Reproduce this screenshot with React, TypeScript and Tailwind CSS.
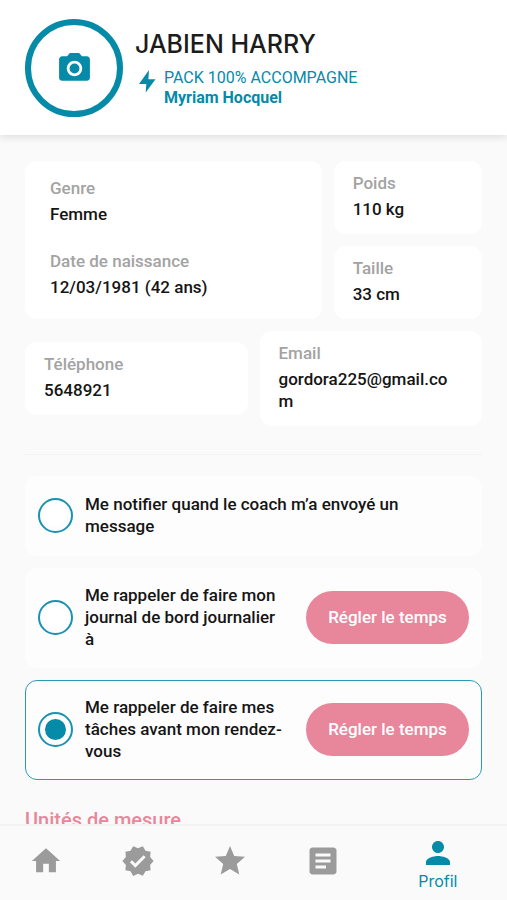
import React, { useState } from 'react';
import { MdArticle, MdCameraAlt, MdHome, MdPerson, MdStar, MdVerified } from 'react-icons/md';

type Tab = 'home' | 'tasks' | 'favorites' | 'journal' | 'profile';

interface Reminder {
  id: string;
  label: string;
  hasTime: boolean;
}

const reminders: Reminder[] = [
  { id: 'message', label: 'Me notifier quand le coach m’a envoyé un message', hasTime: false },
  { id: 'journal', label: 'Me rappeler de faire mon journal de bord journalier à', hasTime: true },
  { id: 'tasks', label: 'Me rappeler de faire mes tâches avant mon rendez-vous', hasTime: true },
];

const tabs: { id: Tab; label: string; icon: React.ReactNode }[] = [
  { id: 'home', label: 'Accueil', icon: <MdHome className="size-[34px]" /> },
  { id: 'tasks', label: 'Tâches', icon: <MdVerified className="size-[34px]" /> },
  { id: 'favorites', label: 'Favoris', icon: <MdStar className="size-9" /> },
  { id: 'journal', label: 'Journal', icon: <MdArticle className="size-9" /> },
  { id: 'profile', label: 'Profil', icon: <MdPerson className="size-9" /> },
];

const BoltIcon = () => (
  <svg viewBox="0 0 17 23" className="mt-0.5 h-[23px] w-[17px] shrink-0" fill="currentColor" aria-hidden="true">
    <path d="M10 0 0 14h7.3l-.6 8.4L16.5 9.3H9.4z" />
  </svg>
);

const Field: React.FC<{ label: string; value: string }> = ({ label, value }) => (
  <div>
    <dt className="text-[#a3a3a3]">{label}</dt>
    <dd className="mt-1 break-all text-[#151515]">{value}</dd>
  </div>
);

const FieldCard: React.FC<{ label: string; value: string }> = (props) => (
  <dl className="rounded-xl bg-white pt-[11px] pr-6 pb-[14px] pl-[19px]">
    <Field {...props} />
  </dl>
);

const Header = () => (
  <header className="z-10 flex shrink-0 items-center gap-3 bg-white px-[25px] pt-[19px] pb-[18px] shadow-[0_2px_8px_rgba(0,0,0,0.12)]">
    <button
      aria-label="Changer la photo"
      className="flex size-[98px] shrink-0 items-center justify-center rounded-full border-[6px] border-[#058aa8] text-[#058aa8]"
    >
      <MdCameraAlt className="size-[37px]" />
    </button>
    <div className="min-w-0">
      <h1 className="font-['Inter',sans-serif] text-[25px] leading-8 font-medium text-[#1c1c1c]">JABIEN HARRY</h1>
      <div className="mt-2 flex gap-2 pl-1 text-base leading-5 text-[#058aa8]">
        <BoltIcon />
        <div>
          <p>PACK 100% ACCOMPAGNE</p>
          <p className="font-bold">Myriam Hocquel</p>
        </div>
      </div>
    </div>
  </header>
);

const App = () => {
  const [selected, setSelected] = useState('tasks');
  const [tab, setTab] = useState<Tab>('profile');

  return (
    <div className="flex h-screen flex-col bg-[#fafafa] font-['Roboto',sans-serif] text-[17px] leading-[22px]">
      <Header />

      <main className="min-h-0 flex-1 overflow-y-auto px-[25px] pt-[26px] pb-6 font-medium [scrollbar-width:none]">
        <div className="grid grid-cols-[2fr_1fr] gap-3">
          <dl className="row-span-2 flex flex-col gap-[25px] rounded-xl bg-white px-[25px] pt-4 pb-5">
            <Field label="Genre" value="Femme" />
            <Field label="Date de naissance" value="12/03/1981 (42 ans)" />
          </dl>
          <FieldCard label="Poids" value="110 kg" />
          <FieldCard label="Taille" value="33 cm" />
        </div>

        <div className="mt-3 grid grid-cols-2 items-center gap-3">
          <FieldCard label="Téléphone" value="5648921" />
          <FieldCard label="Email" value="gordora225@gmail.com" />
        </div>

        <hr className="mt-7 mb-[21px] border-[#f2f2f2]" />

        <div className="flex flex-col gap-3">
          {reminders.map(({ id, label, hasTime }) => (
            <div
              key={id}
              className={`flex min-h-20 items-center gap-5 rounded-xl border bg-[#fdfdfd] px-3 pt-[15px] pb-[17px] ${selected === id ? 'border-[#2b9bb5]' : 'border-[#fdfdfd]'}`}
            >
              <label className="flex flex-1 items-center gap-3 text-[#151515]">
                <input
                  type="radio"
                  name="reminder"
                  checked={selected === id}
                  onChange={() => setSelected(id)}
                  className="size-[35px] shrink-0 appearance-none rounded-full border-2 border-[#1b93b0] bg-white bg-clip-content p-[5px] checked:bg-[#058aa8]"
                />
                <span>{label}</span>
              </label>
              {hasTime && (
                <button className="h-[53px] w-[163px] shrink-0 rounded-full bg-[#e8879b] text-white">
                  Régler le temps
                </button>
              )}
            </div>
          ))}
        </div>

        <h2 className="mt-[26px] text-xl text-[#e8879b]">Unités de mesure</h2>
      </main>

      <nav className="grid h-[76px] shrink-0 grid-cols-[2fr_2fr_2fr_2fr_3fr] border-t-2 border-[#f3f3f3] bg-[#fafafa] pb-1">
        {tabs.map(({ id, label, icon }) => (
          <button
            key={id}
            aria-label={label}
            aria-current={tab === id ? 'page' : undefined}
            onClick={() => setTab(id)}
            className={`flex flex-col items-center justify-center ${tab === id ? 'pt-1 text-[#058aa8]' : 'text-[#9b9b9b]'}`}
          >
            {icon}
            {tab === id && <span className="font-['Inter',sans-serif] text-base leading-5">{label}</span>}
          </button>
        ))}
      </nav>
    </div>
  );
};

export default App;
